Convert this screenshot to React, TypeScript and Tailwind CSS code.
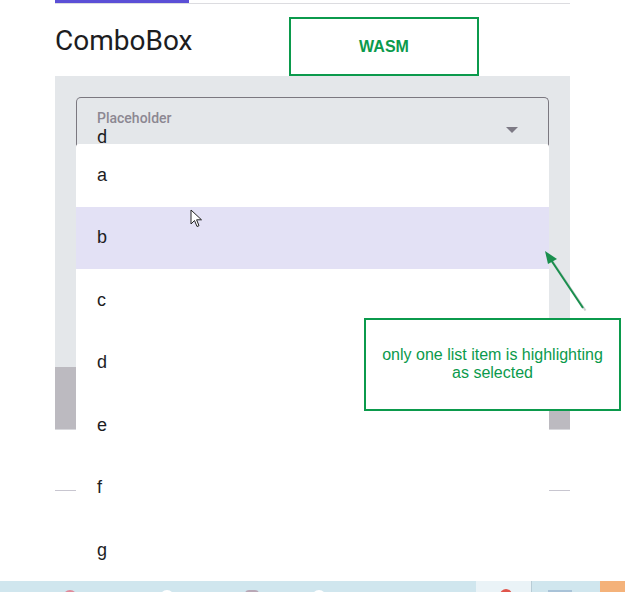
import React from "react";

const items = ["a", "b", "c", "d", "e", "f", "g"];

export default function App() {
  return (
    <div
      className="relative w-[625px] h-[592px] bg-white overflow-hidden text-[#1d1d1f]"
      style={{ fontFamily: "Roboto, 'Liberation Sans', sans-serif" }}
    >
      {/* Page column */}
      <div className="ml-[55px] w-[515px] flex flex-col">
        {/* Tab strip */}
        <div className="relative h-[4px] border-b border-[#dcdce0]">
          <div className="absolute left-0 top-0 h-[3px] w-[134px] bg-[#5b4fd6]" />
        </div>
        {/* Title */}
        <div className="h-[72px] flex items-start pt-[21px]">
          <h1 className="text-[28px] leading-[32px] font-normal">ComboBox</h1>
        </div>
        {/* Gray panel */}
        <div className="bg-[#e4e7ea] h-[291px] px-[21px] pt-[21px]">
          <div className="relative h-[60px] border border-b-0 border-[#7b7880] rounded-t-[5px] pl-[20px] pt-[12px]">
            <div className="text-[14px] leading-[16px] font-medium text-[#8c8792]">Placeholder</div>
            <div className="text-[18px] leading-[20px] mt-[1px]">d</div>
            <div className="absolute right-[30px] top-[29px] w-0 h-0 border-l-[6px] border-r-[6px] border-t-[6px] border-l-transparent border-r-transparent border-t-[#7d7a85]" />
          </div>
        </div>
        <div className="h-[63px] bg-[#bcbac0] border-b border-[#d8d8dc]" />
        <div className="h-[60px]" />
        <div className="h-px bg-[#c8c6d0]" />
      </div>

      {/* Dropdown list (overlay) */}
      <ul className="absolute left-[76px] top-[144px] w-[473px] h-[437px] bg-white rounded-t-[3px] flex flex-col">
        {items.map((it) => (
          <li
            key={it}
            className={`h-[62.5px] shrink-0 flex items-center pl-[21px] text-[18px] ${
              it === "b" ? "bg-[#e3e1f5]" : ""
            }`}
            style={{ fontFamily: "'Liberation Sans', Arial, sans-serif" }}
          >
            {it}
          </li>
        ))}
      </ul>

      {/* WASM annotation */}
      <div className="absolute left-[289px] top-[17px] w-[190px] h-[59px] border-2 border-[#0b9a4c] bg-white flex items-center justify-center">
        <span
          className="text-[16px] font-bold text-[#0b9a4c]"
          style={{ fontFamily: "'Liberation Sans', Arial, sans-serif" }}
        >
          WASM
        </span>
      </div>

      {/* Note annotation */}
      <div className="absolute left-[364px] top-[318px] w-[257px] h-[93px] border-2 border-[#0b9a4c] bg-white flex flex-col items-center pt-[26px]">
        <span
          className="text-[16px] leading-[18px] text-[#0b9a4c] text-center"
          style={{ fontFamily: "'Liberation Sans', Arial, sans-serif" }}
        >
          only one list item is highlighting
          <br />
          as selected
        </span>
      </div>

      {/* Arrow */}
      <svg className="absolute left-[535px] top-[245px]" width="60" height="70" viewBox="0 0 60 70">
        <line x1="49" y1="64" x2="14" y2="12" stroke="#9aa3a0" strokeWidth="2" opacity="0.5" transform="translate(1.5,1.5)" />
        <line x1="48" y1="63" x2="14" y2="12" stroke="#1a8f4e" strokeWidth="2" />
        <polygon points="10,6 22,14 13,19" fill="#1a8f4e" />
      </svg>

      {/* Mouse cursor */}
      <svg className="absolute left-[190px] top-[209px]" width="14" height="20" viewBox="0 0 14 20">
        <path d="M1 1 L1 15 L4.5 11.5 L7 17.5 L9 16.7 L6.6 10.8 L11.5 10.8 Z" fill="white" stroke="#222" strokeWidth="1" strokeLinejoin="round" />
      </svg>

      {/* Taskbar */}
      <div className="absolute left-0 top-[581px] w-[625px] h-[11px] flex bg-[#d0e6ee]">
        <div className="relative w-[476px] h-full">
          <div className="absolute left-[63px] top-[9px] w-[14px] h-[14px] rounded-full bg-[#e08a9a]" />
          <div className="absolute left-[160px] top-[9px] w-[14px] h-[14px] rounded-full bg-white" />
          <div className="absolute left-[245px] top-[9px] w-[14px] h-[14px] rounded-sm bg-[#b9a8b6]" />
          <div className="absolute left-[312px] top-[9px] w-[14px] h-[14px] rounded-full bg-white" />
        </div>
        <div className="relative w-[56px] h-full bg-[#eaf3f7] border-r border-[#b8ccd6]">
          <div className="absolute left-[24px] top-[8px] w-[12px] h-[12px] rounded-full bg-[#e0554b]" />
        </div>
        <div className="relative w-[68px] h-full">
          <div className="absolute left-[16px] top-[9px] w-[24px] h-[6px] bg-[#a9c3d8]" />
        </div>
        <div className="flex-1 h-full bg-[#f4b27a]" />
      </div>
    </div>
  );
}
